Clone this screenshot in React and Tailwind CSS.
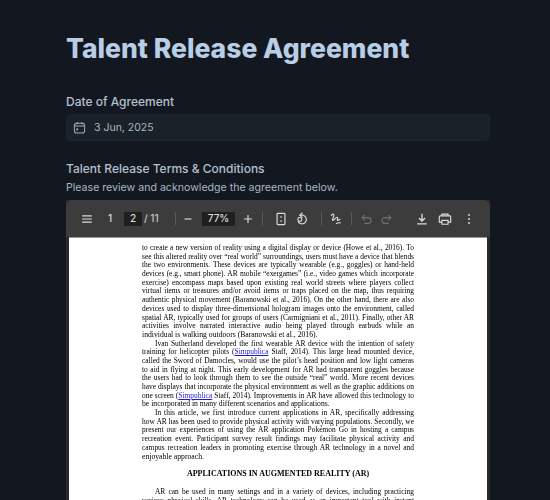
const serif = { fontFamily: '"Liberation Serif", serif' };

const lines = [
  ["to create a new version of reality using a digital display or device (Howe et al., 2016). To"],
  ["see this altered reality over “real world” surroundings, users must have a device that blends"],
  ["the two environments. These devices are typically wearable (e.g., goggles) or hand-held"],
  ["devices (e.g., smart phone). AR mobile “exergames” (i.e., video games which incorporate"],
  ["exercise) encompass maps based upon existing real world streets where players collect"],
  ["virtual items or treasures and/or avoid items or traps placed on the map, thus requiring"],
  ["authentic physical movement (Baranowski et al., 2016). On the other hand, there are also"],
  ["devices used to display three-dimensional hologram images onto the environment, called"],
  ["spatial AR, typically used for groups of users (Carmigniani et al., 2011). Finally, other AR"],
  ["activities involve narrated interactive audio being played through earbuds while an"],
  ["individual is walking outdoors (Baranowski et al., 2016).", "last"],
  ["Ivan Sutherland developed the first wearable AR device with the intention of safety", "indent"],
  ["training for helicopter pilots (", "link", "Staff, 2014). This large head mounted device,"],
  ["called the Sword of Damocles, would use the pilot’s head position and low light cameras"],
  ["to aid in flying at night. This early development for AR had transparent goggles because"],
  ["the users had to look through them to see the outside “real” world. More recent devices"],
  ["have displays that incorporate the physical environment as well as the graphic additions on"],
  ["one screen (", "link", "Staff, 2014). Improvements in AR have allowed this technology to"],
  ["be incorporated in many different scenarios and applications.", "last"],
  ["In this article, we first introduce current applications in AR, specifically addressing", "indent"],
  ["how AR has been used to provide physical activity with varying populations. Secondly, we"],
  ["present our experiences of using the AR application Pokémon Go in hosting a campus"],
  ["recreation event. Participant survey result findings may facilitate physical activity and"],
  ["campus recreation leaders in promoting exercise through AR technology in a novel and"],
  ["enjoyable approach.", "last"],
];

function PdfLine({ line }) {
  const [text, kind, rest] = line;
  if (kind === "link") {
    return (
      <div className="text-justify [text-align-last:justify]">
        {text}
        <span className="text-[#1a1ad8] underline">Simpublica</span> {rest}
      </div>
    );
  }
  if (kind === "last") return <div className="text-[7.700px]">{text}</div>;
  if (kind === "indent") return <div className="pl-[13px] text-justify [text-align-last:justify]">{text}</div>;
  return <div className="text-justify [text-align-last:justify]">{text}</div>;
}

function Icon({ children, muted, className }) {
  return (
    <svg
      viewBox="0 0 16 16"
      className={`h-[14px] w-[14px] shrink-0 ${muted ? "text-[#6f7072]" : "text-[#dcdcdc]"} ${className}`}
      fill="none"
      stroke="currentColor"
      strokeWidth="1.3"
    >
      {children}
    </svg>
  );
}

function Divider({ className }) {
  return <div className={`h-[13px] w-px shrink-0 bg-[#58595b] ${className}`} />;
}

function Toolbar() {
  return (
    <div className="flex h-[37px] items-center rounded-t-md bg-[#3c3c3c] text-[10px] font-medium text-[#dcdcdc]">
      <Icon className="ml-[14px]">
        <path d="M2.500 4.500h11M2.500 8h11M2.500 11.500h11" />
      </Icon>
      <span className="ml-[12px] w-[8px] text-center">1</span>
      <div className="ml-[10px] flex h-[14px] w-[18px] items-center justify-center bg-[#1f1f1f]">2</div>
      <span className="ml-[2px] w-[16px] whitespace-nowrap text-[#c4c4c4]">/ 11</span>
      <Divider className="ml-[15px]" />
      <Icon className="ml-[5px]">
        <path d="M4 8h8" />
      </Icon>
      <div className="ml-[7px] flex h-[14px] w-[33px] items-center justify-center bg-[#1f1f1f]">77%</div>
      <Icon className="ml-[6px]">
        <path d="M3.500 8h9M8 3.500v9" />
      </Icon>
      <Divider className="ml-[7px]" />
      <Icon className="ml-[11px]">
        <rect x="3.500" y="1.500" width="9" height="13" rx="1" />
        <path d="M8 4.500v2M8 9.500v2" />
      </Icon>
      <Icon className="ml-[7px]">
        <path d="M5.500 4.200A5 5 0 1 1 3.400 10.500" />
        <path d="M8.500.8 5.500 3.800l3 2.700" />
        <circle cx="5.500" cy="8.500" r="2.200" />
      </Icon>
      <Divider className="ml-[12px]" />
      <Icon className="ml-[7px]">
        <path d="M2.500 4.500c1-3 3.500-2.500 3 0S3 9.500 4.500 9.500 8 5.500 9.500 6s-1 3.500.5 3.500 2-1.500 3-1" />
        <path d="M8 13.500c1.500-1.500 3-1.500 5.500-1" />
      </Icon>
      <Divider className="ml-[8px]" />
      <Icon muted className="ml-[7px]">
        <path d="M4 6.500h6.500a3 3 0 0 1 0 6.500H6" />
        <path d="M6.500 3.500l-3 3 3 3" />
      </Icon>
      <Icon muted className="ml-[7px]">
        <path d="M12 6.500H5.500a3 3 0 0 0 0 6.500H10" />
        <path d="m9.500 3.500 3 3-3 3" />
      </Icon>
      <Icon className="ml-[21px]">
        <path d="M8 2v8M4.500 6.800 8 10.300l3.500-3.500M2.500 13.500h11" strokeWidth="1.500" />
      </Icon>
      <Icon className="ml-[9px]">
        <path d="M4.500 5V2.500h7V5M4.500 11.500h-3V5.500a1 1 0 0 1 1-1h11a1 1 0 0 1 1 1v6h-3" />
        <path d="M4.500 9.500h7v4.500h-7z" />
      </Icon>
      <Icon className="ml-[10px]">
        <circle cx="8" cy="3.500" r="1.100" fill="currentColor" stroke="none" />
        <circle cx="8" cy="8" r="1.100" fill="currentColor" stroke="none" />
        <circle cx="8" cy="12.500" r="1.100" fill="currentColor" stroke="none" />
      </Icon>
    </div>
  );
}

export default function App() {
  return (
    <div
      className="h-[500px] overflow-hidden bg-[#131820] pt-[30px] pr-[60px] pl-[66px]"
      style={{ fontFamily: "Inter, sans-serif" }}
    >
      <h1 className="text-[26.500px] leading-9 font-extrabold text-[#b9cde4]">Talent Release Agreement</h1>

      <div className="mt-[26px] text-[12px] leading-5 font-medium text-[#b4c0ce]">Date of Agreement</div>
      <div className="mt-[2px] flex h-[27px] items-center gap-[8px] rounded border border-[#1c252d] bg-[#1a2229] pl-[6px] text-[10.500px] text-[#aab6c4]">
        <svg viewBox="0 0 14 14" className="h-[13px] w-[13px]" fill="none" stroke="#a0acb8" strokeWidth="1.100">
          <rect x="1.500" y="2.500" width="11" height="10.500" rx="2.500" />
          <path d="M1.500 5.500h11M4.500 1v2.500M9.500 1v2.500" />
          <rect x="3.500" y="8" width="2" height="2" fill="#a0acb8" stroke="none" />
        </svg>
        3 Jun, 2025
      </div>

      <div className="mt-[18px] text-[12px] leading-5 font-medium text-[#b4c0ce]">
        Talent Release Terms &amp; Conditions
      </div>
      <div className="mt-[1px] text-[10.600px] leading-4 text-[#aab6c4]">
        Please review and acknowledge the agreement below.
      </div>

      <div className="mt-[4px] h-[300px] bg-[#28292b]">
        <Toolbar />
        <div className="px-[3px]">
          <div
            className="h-[263px] overflow-hidden border-t border-[#999] bg-white pt-[6px] pr-[73px] pl-[73px] text-[7.450px] leading-[8.680px] whitespace-nowrap text-black blur-[0.25px]"
            style={serif}
          >
            {lines.map((line) => (
              <PdfLine key={line[0]} line={line} />
            ))}
            <div className="mt-[8.700px] text-center text-[8px] font-bold">APPLICATIONS IN AUGMENTED REALITY (AR)</div>
            <div className="mt-[9.500px] pl-[13px] text-justify [text-align-last:justify]">
              AR can be used in many settings and in a variety of devices, including practicing
            </div>
            <div className="text-justify [text-align-last:justify]">
              various physical skills. AR technology can be used as an important tool with instant
            </div>
          </div>
        </div>
      </div>
    </div>
  );
}
